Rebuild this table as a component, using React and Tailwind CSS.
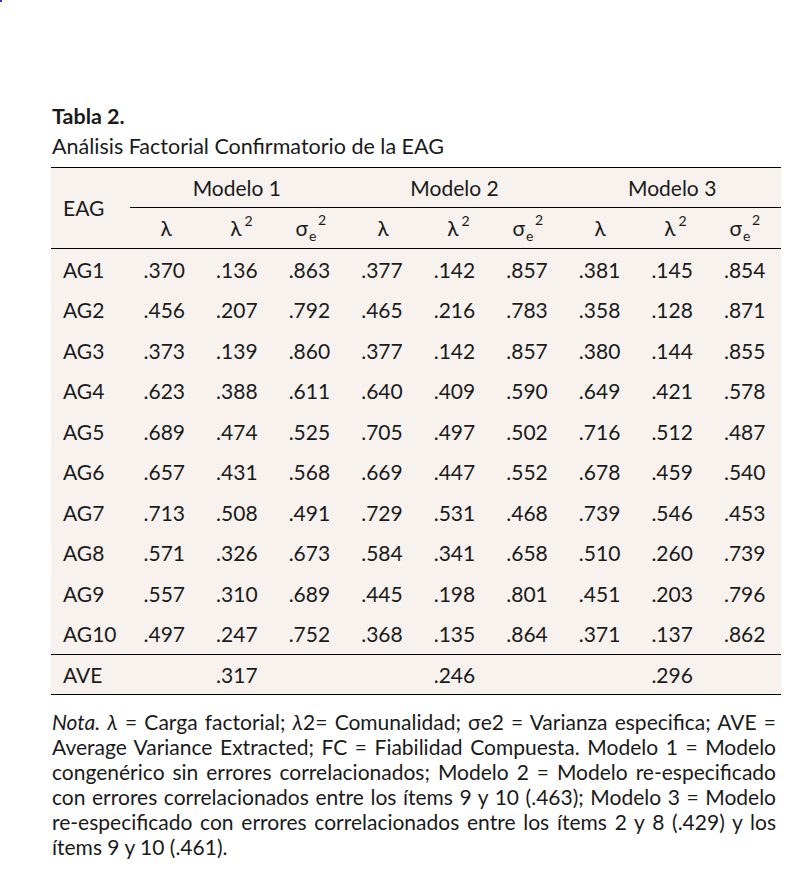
const modelos = ["Modelo 1", "Modelo 2", "Modelo 3"];

const filas = [
   ["AG1", ".370", ".136", ".863", ".377", ".142", ".857", ".381", ".145", ".854"],
   ["AG2", ".456", ".207", ".792", ".465", ".216", ".783", ".358", ".128", ".871"],
   ["AG3", ".373", ".139", ".860", ".377", ".142", ".857", ".380", ".144", ".855"],
   ["AG4", ".623", ".388", ".611", ".640", ".409", ".590", ".649", ".421", ".578"],
   ["AG5", ".689", ".474", ".525", ".705", ".497", ".502", ".716", ".512", ".487"],
   ["AG6", ".657", ".431", ".568", ".669", ".447", ".552", ".678", ".459", ".540"],
   ["AG7", ".713", ".508", ".491", ".729", ".531", ".468", ".739", ".546", ".453"],
   ["AG8", ".571", ".326", ".673", ".584", ".341", ".658", ".510", ".260", ".739"],
   ["AG9", ".557", ".310", ".689", ".445", ".198", ".801", ".451", ".203", ".796"],
   ["AG10", ".497", ".247", ".752", ".368", ".135", ".864", ".371", ".137", ".862"],
];

const ave = ["AVE", "", ".317", "", "", ".246", "", "", ".296", ""];

const grid = "grid grid-cols-[77px_repeat(9,1fr)]";

function Lambda() {
   return <span>λ</span>;
}

function Lambda2() {
   return (
      <span className="inline-flex items-start">
         <span>λ</span>
         <span className="text-[14px] leading-none ml-[3px] mt-[2px]">2</span>
      </span>
   );
}

function Sigma() {
   return (
      <span className="inline-flex items-start">
         σ
         <span className="flex flex-col text-[14px] leading-none ml-[1px]">
            <span className="ml-[9px] mt-[1px]">2</span>
            <span className="mt-[2px]">e</span>
         </span>
      </span>
   );
}

const notaLineas = [
   <>
      <i>Nota.</i> <i>λ</i> = Carga factorial; <i>λ</i>2= Comunalidad; σe2 = Varianza especifica; AVE =
   </>,
   <>Average Variance Extracted; FC = Fiabilidad Compuesta. Modelo 1 = Modelo</>,
   <>congenérico sin errores correlacionados; Modelo 2 = Modelo re-especificado</>,
   <>con errores correlacionados entre los ítems 9 y 10 (.463); Modelo 3 = Modelo</>,
   <>re-especificado con errores correlacionados entre los ítems 2 y 8 (.429) y los</>,
];

export default function App() {
   return (
      <div className="min-h-[877px] w-[796px] bg-white text-[#1a1a1a] font-['Lato','Liberation_Sans',sans-serif] text-[21px] relative">
         <div className="absolute top-0 left-0 w-[2px] h-[2px] bg-[#3030ff]" />
         <div className="pl-[51px] pt-[101px] w-[781px]">
            <div className="font-bold text-[21.5px] leading-[30px] pl-[1px]">Tabla 2.</div>
            <div className="text-[21.5px] leading-[30px] pl-[1px] mb-[6px]">Análisis Factorial Confirmatorio de la EAG</div>

            {/* TABLA */}
            <div className="bg-[#f7f2ee] border-t-[1.5px] border-b-[1.5px] border-black">
               <div className={`${grid} border-b-[1.5px] border-black`}>
                  <div className="row-span-2 flex items-center pl-[12px]">EAG</div>
                  {modelos.map(m => (
                     <div key={m} className="col-span-3 h-[40px] flex items-center justify-center">
                        {m}
                     </div>
                  ))}
                  <div className="col-span-9 h-[41px] grid grid-cols-9 border-t-[1.5px] border-black ml-[2px] -mt-[1px]">
                     {[0, 1, 2].map(i => [
                        <div key={`a${i}`} className="flex items-center justify-center">
                           <Lambda />
                        </div>,
                        <div key={`b${i}`} className="flex items-center justify-center pl-[6px]">
                           <Lambda2 />
                        </div>,
                        <div key={`c${i}`} className="flex items-center justify-center">
                           <Sigma />
                        </div>,
                     ])}
                  </div>
               </div>

               {filas.map(f => (
                  <div key={f[0]} className={`${grid} h-[40.5px]`}>
                     {f.map((v, i) => (
                        <div key={i} className={i === 0 ? "flex items-center pl-[12px]" : "flex items-center justify-center"}>
                           {v}
                        </div>
                     ))}
                  </div>
               ))}

               <div className={`${grid} h-[40px] border-t-[1.5px] border-black`}>
                  {ave.map((v, i) => (
                     <div key={i} className={i === 0 ? "flex items-center pl-[12px]" : "flex items-center justify-center"}>
                        {v}
                     </div>
                  ))}
               </div>
            </div>

            {/* NOTA */}
            <div className="mt-[14px] text-[21px] leading-[25px] pl-[1px] w-[725px]">
               {notaLineas.map((l, i) => (
                  <div key={i} className="whitespace-nowrap text-justify [text-align-last:justify]">
                     {l}
                  </div>
               ))}
               <div>ítems 9 y 10 (.461).</div>
            </div>
         </div>
      </div>
   );
}
